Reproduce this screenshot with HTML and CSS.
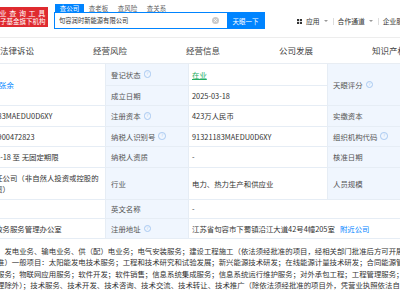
FILE: index.html
```html
<!DOCTYPE html>
<html lang="zh">
<head>
<meta charset="utf-8">
<title>句容润时新能源有限公司</title>
<link rel="stylesheet" href="styles.css">
</head>
<body>
<div class="page">
  <header class="topbar">
    <div class="logo">
      <span class="l1">业查询工具</span>
      <span class="l2">子基金旗下机构</span>
    </div>
    <div class="search">
      <div class="stabs">
        <span class="stab active">查公司</span>
        <span class="stab">查老板</span>
        <span class="stab">查风险</span>
        <span class="stab">查关系</span>
      </div>
      <div class="sbox">
        <span class="stext">句容润时新能源有限公司</span>
        <svg class="clear" width="7" height="7" viewBox="0 0 7 7"><circle cx="3.5" cy="3.5" r="3.5" fill="#c9c9c9"/><path d="M2.2 2.2L4.8 4.8M4.8 2.2L2.2 4.8" stroke="#fff" stroke-width="0.8"/></svg>
        <button class="sbtn">天眼一下</button>
      </div>
    </div>
    <nav class="nav">
      <svg class="appicon" width="5" height="5" viewBox="0 0 5 5"><rect x="0" y="0" width="2.1" height="2.1" fill="#333"/><rect x="2.9" y="0" width="2.1" height="2.1" fill="#333"/><rect x="0" y="2.9" width="2.1" height="2.1" fill="#333"/><rect x="2.9" y="2.9" width="2.1" height="2.1" fill="#333"/></svg>
      <span class="navtext">应用</span><span class="caret"></span>
      <span class="sep"></span>
      <span class="navtext">合作通道</span><span class="caret"></span>
      <span class="sep"></span>
      <span class="navtext">企业服务</span>
    </nav>
  </header>

  <div class="tabs">
    <span class="tab">法律诉讼</span>
    <span class="tab">经营风险</span>
    <span class="tab">经营信息</span>
    <span class="tab">公司发展</span>
    <span class="tab">知识产权</span>
  </div>

  <div class="grid">
    <div class="c v r12"><span class="avatar">张</span><span class="link">张余</span></div>
    <div class="c lb">登记状态<span class="q">?</span></div>
    <div class="c v"><span class="green">在业</span></div>
    <div class="c lb r12">天眼评分<span class="q">?</span></div>
    <div class="c v r12"></div>

    <div class="c lb">成立日期</div>
    <div class="c v">2025-03-18</div>

    <div class="c v">91321183MAEDU0D6XY</div>
    <div class="c lb">注册资本<span class="q">?</span></div>
    <div class="c v">423万人民币</div>
    <div class="c lb">实缴资本</div>
    <div class="c v"></div>

    <div class="c v">321183900472823</div>
    <div class="c lb">纳税人识别号<span class="q">?</span></div>
    <div class="c v">91321183MAEDU0D6XY</div>
    <div class="c lb">组织机构代码<span class="q">?</span></div>
    <div class="c v"></div>

    <div class="c v">2025-03-18 至 无固定期限</div>
    <div class="c lb">纳税人资质</div>
    <div class="c v">-</div>
    <div class="c lb">核准日期</div>
    <div class="c v"></div>

    <div class="c v two"><span>有限责任公司（非自然人投资或控股的<br>法人独资）</span></div>
    <div class="c lb">行业</div>
    <div class="c v">电力、热力生产和供应业</div>
    <div class="c lb">人员规模</div>
    <div class="c v"></div>

    <div class="c v"></div>
    <div class="c lb">英文名称</div>
    <div class="c v wide">-</div>

    <div class="c v">句容市政务服务管理办公室</div>
    <div class="c lb">注册地址<span class="q">?</span></div>
    <div class="c v wide">江苏省句容市下蜀镇沿江大道42号4幢205室<span class="link near">附近公司</span></div>

    <div class="scope">：发电业务、输电业务、供（配）电业务；电气安装服务；建设工程施工（依法须经批准的项目，经相关部门批准后方可开展相关经营活动，具体经营项目以审批结果为准）<br>准）一般项目：太阳能发电技术服务；工程和技术研究和试验发展；新兴能源技术研发；在线能源计量技术研发；合同能源管理；节能管理服务<br>服务；物联网应用服务；软件开发；软件销售；信息系统集成服务；信息系统运行维护服务；对外承包工程；工程管理服务；工程技术服务（规划管<br>理除外）；技术服务、技术开发、技术咨询、技术交流、技术转让、技术推广（除依法须经批准的项目外，凭营业执照依法自主开展经营活动）</div>
  </div>
</div>
</body>
</html>
```

FILE: styles.css
```css
html, body {
  margin: 0;
  padding: 0;
}
body {
  width: 400px;
  height: 300px;
  overflow: hidden;
  background: #fff;
  color: #333;
  font-family: "Noto Sans CJK SC", "Noto Sans", sans-serif;
}
.page {
  width: 400px;
  overflow: hidden;
}

/* header */
.topbar {
  display: flex;
  align-items: flex-start;
  height: 37px;
  border-bottom: 1px solid #ededed;
  background: #fff;
}
.logo {
  margin-top: 7px;
  width: 48px;
  height: 20px;
  flex: 0 0 48px;
  background: #df2a2f;
  color: #fff;
  display: flex;
  flex-direction: column;
  align-items: flex-end;
  justify-content: center;
  overflow: hidden;
}
.l1 {
  font-size: 7px;
  line-height: 8px;
  letter-spacing: 2.7px;
  white-space: nowrap;
}
.l2 {
  font-size: 6.5px;
  line-height: 8px;
  margin-right: 2.5px;
  white-space: nowrap;
}
.search {
  margin-left: 6px;
  margin-top: 4px;
  width: 211px;
  flex: 0 0 211px;
}
.stabs {
  display: flex;
  height: 8px;
  margin-left: 1px;
}
.stab {
  width: 29px;
  text-align: center;
  font-size: 6.5px;
  line-height: 8px;
  color: #666;
}
.stab.active {
  background: #0084ff;
  color: #fff;
}
.sbox {
  height: 17px;
  box-sizing: border-box;
  border: 1px solid #0084ff;
  display: flex;
  align-items: center;
}
.stext {
  flex: 1;
  padding-left: 4px;
  font-size: 6.3px;
  color: #333;
  white-space: nowrap;
}
.clear {
  margin-right: 8px;
}
.sbtn {
  width: 37px;
  height: 15px;
  border: none;
  padding: 0;
  background: #0084ff;
  color: #fff;
  font-family: inherit;
  font-size: 6.5px;
}
.nav {
  margin-left: 32px;
  margin-top: 17px;
  height: 8px;
  display: flex;
  align-items: center;
  white-space: nowrap;
}
.appicon {
  margin-right: 4px;
}
.navtext {
  font-size: 6.8px;
  line-height: 8px;
  color: #333;
}
.caret {
  width: 0;
  height: 0;
  margin-left: 4px;
  border-left: 2px solid transparent;
  border-right: 2px solid transparent;
  border-top: 2.5px solid #999;
}
.sep {
  width: 1px;
  height: 7px;
  background: #ddd;
  margin: 0 4px 0 5px;
}

/* tab row */
.tabs {
  display: flex;
  align-items: center;
  height: 26px;
  margin-left: -29.5px;
  width: 500px;
  border-bottom: 1px solid #e8edf3;
  box-sizing: border-box;
  padding-bottom: 1px;
}
.tab {
  flex: 0 0 93px;
  text-align: center;
  font-size: 8.5px;
  color: #444;
  white-space: nowrap;
}

/* info grid */
.grid {
  display: grid;
  margin-left: -30px;
  grid-template-columns: 136px 83px 139px 84px 100px;
  grid-template-rows: 21.5px 20.5px 20.5px 20.5px 20.5px 32px 19.5px 20px auto;
}
.c {
  box-sizing: border-box;
  border-right: 1px solid #e6edf5;
  border-bottom: 1px solid #e6edf5;
  display: flex;
  align-items: center;
  padding: 0 3px;
  font-size: 7.4px;
  white-space: nowrap;
  overflow: hidden;
}
.lb {
  background: #f0f6fe;
  padding-left: 5px;
  color: #555;
}
.v {
  color: #333;
}
.r12 {
  grid-row: span 2;
}
.wide {
  grid-column: span 3;
}
.two {
  line-height: 11px;
}
.avatar {
  width: 20px;
  height: 14px;
  margin-right: 6px;
  background: #f4a64b;
  color: #fff;
  font-size: 6px;
  display: flex;
  align-items: center;
  justify-content: center;
  flex: 0 0 20px;
}
.link {
  color: #0084ff;
}
.near {
  margin-left: 5px;
}
.green {
  color: #23ad63;
  text-decoration: underline;
  text-underline-offset: 1px;
}
.q {
  width: 5.6px;
  height: 5.6px;
  margin-left: 3px;
  border: 0.8px solid #a8c9f1;
  border-radius: 50%;
  color: #a8c9f1;
  font-size: 4.5px;
  line-height: 5.6px;
  text-align: center;
  flex: 0 0 auto;
}
.scope {
  grid-column: 1 / -1;
  padding: 6px 0 0 27px;
  font-size: 7.4px;
  line-height: 11.3px;
  white-space: nowrap;
  overflow: hidden;
  color: #333;
}
```
